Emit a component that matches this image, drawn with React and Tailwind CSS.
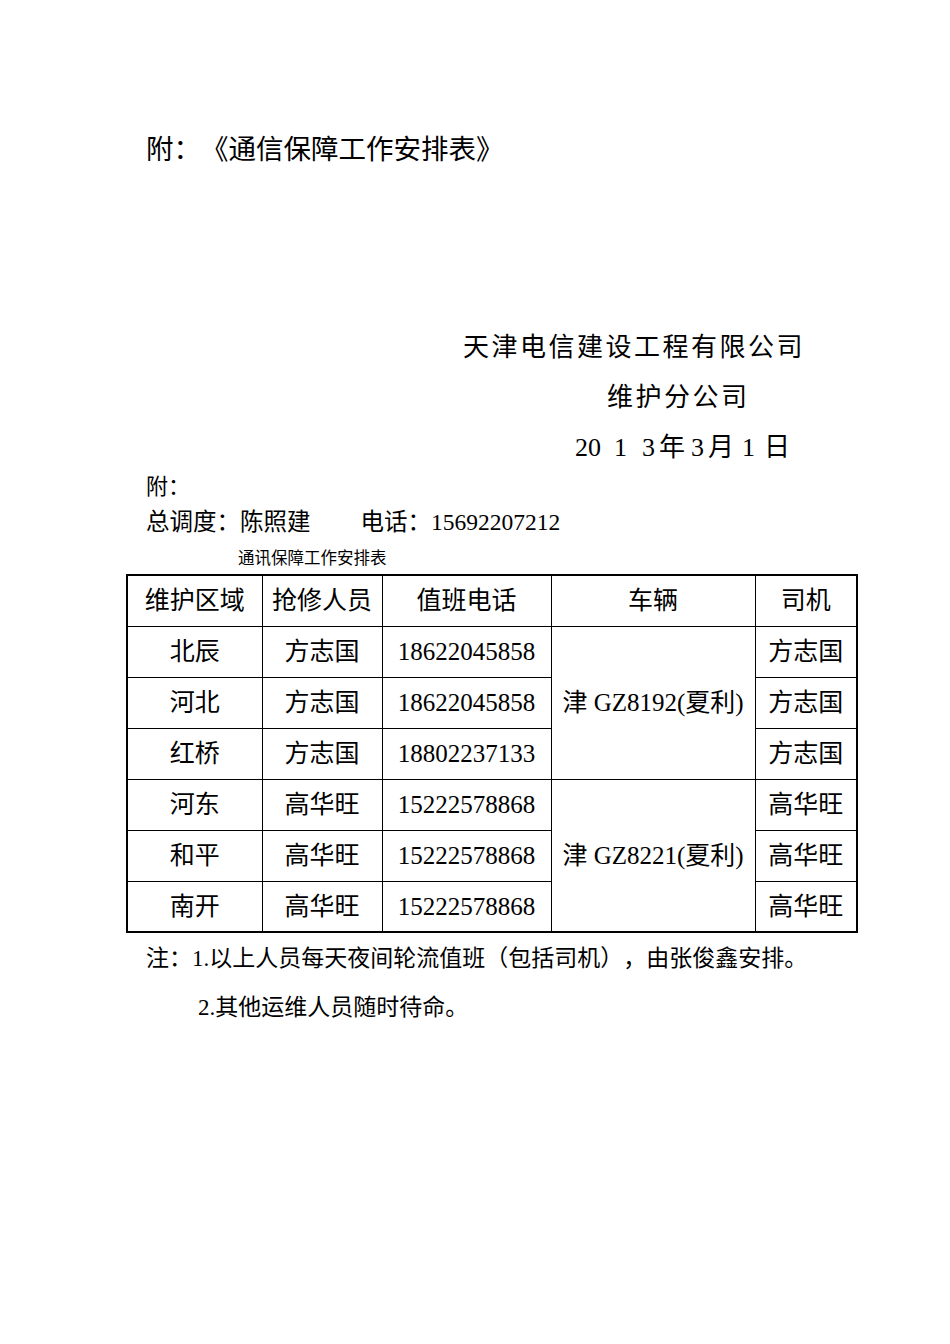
import React from "react";

const rows = [
  { area: "北辰", person: "方志国", phone: "18622045858", driver: "方志国" },
  { area: "河北", person: "方志国", phone: "18622045858", driver: "方志国" },
  { area: "红桥", person: "方志国", phone: "18802237133", driver: "方志国" },
  { area: "河东", person: "高华旺", phone: "15222578868", driver: "高华旺" },
  { area: "和平", person: "高华旺", phone: "15222578868", driver: "高华旺" },
  { area: "南开", person: "高华旺", phone: "15222578868", driver: "高华旺" },
];

const cars = { 0: "津 GZ8192(夏利)", 3: "津 GZ8221(夏利)" };

function App() {
  return (
    <div className="w-[950px] min-h-[1344px] bg-white text-black [text-spacing-trim:space-all] font-['Liberation_Serif','Noto_Sans_CJK_SC',serif]">
      {/* 标题 */}
      <div className="pt-[130px] pl-[146px] text-[27.5px] leading-[40px]">
        附：《通信保障工作安排表》
      </div>

      {/* 落款 */}
      <div className="mt-[153px] text-[26px] leading-[50px]">
        <div className="pl-[463px] tracking-[2.5px]">天津电信建设工程有限公司</div>
        <div className="pl-[607px] tracking-[2.5px]">维护分公司</div>
        <div className="pl-[575px] flex">
          <span>20</span>
          <span className="ml-[13px]">1</span>
          <span className="ml-[15px]">3</span>
          <span className="ml-[4px]">年</span>
          <span className="ml-[6px]">3</span>
          <span className="ml-[4px]">月</span>
          <span className="ml-[8px]">1</span>
          <span className="ml-[9px]">日</span>
        </div>
      </div>

      <div className="pl-[146px]">
        <div className="h-[28px] text-[22px] leading-[28px]">附：</div>
        <div className="h-[42px] text-[23.5px] leading-[42px] flex">
          <span>总调度：陈照建</span>
          <span className="ml-[50px]">电话：15692207212</span>
        </div>
      </div>

      <div className="h-[31px] pl-[238px] text-[16.5px] leading-[31px]">
        通讯保障工作安排表
      </div>

      {/* 表格 */}
      <div className="pl-[126px]">
        <table className="w-[730px] table-fixed border-collapse border-2 border-black text-[25px]">
          <colgroup>
            <col className="w-[135px]" />
            <col className="w-[120px]" />
            <col className="w-[169px]" />
            <col className="w-[204px]" />
            <col className="w-[102px]" />
          </colgroup>
          <thead>
            <tr className="h-[51px]">
              <th className="border border-black font-normal text-center p-0">维护区域</th>
              <th className="border border-black font-normal text-center p-0">抢修人员</th>
              <th className="border border-black font-normal text-center p-0">值班电话</th>
              <th className="border border-black font-normal text-center p-0">车辆</th>
              <th className="border border-black font-normal text-center p-0">司机</th>
            </tr>
          </thead>
          <tbody>
            {rows.map((r, i) => (
              <tr key={i} className="h-[51px]">
                <td className="border border-black text-center p-0">{r.area}</td>
                <td className="border border-black text-center p-0">{r.person}</td>
                <td className="border border-black text-center p-0">{r.phone}</td>
                {cars[i] && (
                  <td rowSpan={3} className="border border-black text-center p-0">
                    {cars[i]}
                  </td>
                )}
                <td className="border border-black text-center p-0">{r.driver}</td>
              </tr>
            ))}
          </tbody>
        </table>
      </div>

      {/* 注 */}
      <div className="pl-[146px] text-[23px]">
        <div className="leading-[52px]">注：1.以上人员每天夜间轮流值班（包括司机），由张俊鑫安排。</div>
        <div className="leading-[46px] pl-[52px]">2.其他运维人员随时待命。</div>
      </div>
    </div>
  );
}

export default App;
